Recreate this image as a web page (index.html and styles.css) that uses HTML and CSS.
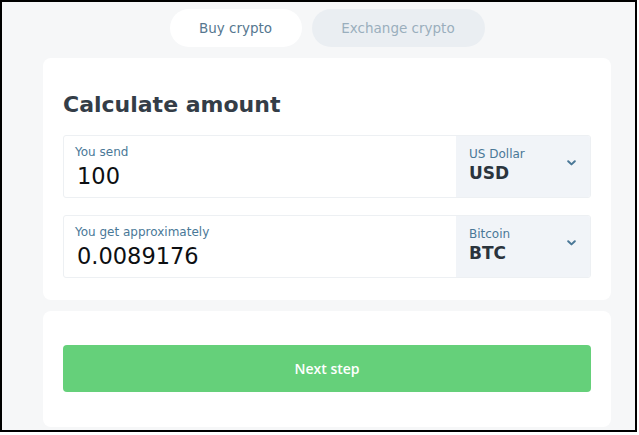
FILE: index.html
```html
<!DOCTYPE html>
<html>
<head>
<meta charset="utf-8">
<link rel="stylesheet" href="styles.css">
</head>
<body>
<div class="frame">
  <div class="content">
    <div class="tabs">
      <div class="tab active">Buy crypto</div>
      <div class="tab">Exchange crypto</div>
    </div>
    <div class="card calc">
      <h1 class="title">Calculate amount</h1>
      <div class="field">
        <div class="amount">
          <div class="label">You send</div>
          <div class="value">100</div>
        </div>
        <div class="currency">
          <div class="cur-text">
            <div class="label">US Dollar</div>
            <div class="code">USD</div>
          </div>
          <svg class="chev" width="9" height="6" viewBox="0 0 9 6"><path d="M1.2 1.2 L4.5 4.4 L7.8 1.2" fill="none" stroke="#4a7897" stroke-width="2" stroke-linecap="round" stroke-linejoin="round"/></svg>
        </div>
      </div>
      <div class="field">
        <div class="amount">
          <div class="label">You get approximately</div>
          <div class="value">0.0089176</div>
        </div>
        <div class="currency">
          <div class="cur-text">
            <div class="label">Bitcoin</div>
            <div class="code">BTC</div>
          </div>
          <svg class="chev" width="9" height="6" viewBox="0 0 9 6"><path d="M1.2 1.2 L4.5 4.4 L7.8 1.2" fill="none" stroke="#4a7897" stroke-width="2" stroke-linecap="round" stroke-linejoin="round"/></svg>
        </div>
      </div>
    </div>
    <div class="card action">
      <button class="next">Next step</button>
    </div>
  </div>
</div>
</body>
</html>
```
FILE: styles.css
```css
html, body {
  margin: 0;
  padding: 0;
  background: #ffffff;
}
.frame {
  width: 633px;
  height: 428px;
  border: 2px solid #000;
  background: #f6f7f8;
  overflow: hidden;
  font-family: "DejaVu Sans", sans-serif;
}
.content {
  width: 568px;
  margin-left: 41px;
  display: flex;
  flex-direction: column;
}
.tabs {
  display: flex;
  justify-content: center;
  gap: 10px;
  padding-top: 7px;
  margin-bottom: 11px;
}
.tab {
  height: 38px;
  border-radius: 19px;
  display: flex;
  align-items: center;
  justify-content: center;
  font-size: 13.5px;
  color: #9aaebd;
  background: #eaeef2;
  width: 173px;
}
.tab.active {
  background: #ffffff;
  color: #56778f;
  width: 132px;
}
.card {
  background: #ffffff;
  border-radius: 8px;
}
.calc {
  padding: 20px 20px 22px;
  display: flex;
  flex-direction: column;
  gap: 17px;
}
.title {
  margin: 13px 0 0;
  font-size: 22px;
  font-weight: bold;
  color: #343d47;
  line-height: 27px;
}
.field {
  display: flex;
  height: 63px;
  border: 1px solid #edf0f3;
  border-radius: 3px;
  box-sizing: border-box;
  overflow: hidden;
}
.amount {
  flex: 1;
  padding: 9px 11px 0;
}
.label {
  font-size: 12px;
  color: #4a7897;
  line-height: 14px;
}
.value {
  font-size: 22.5px;
  color: #0d0f12;
  font-weight: 500;
  line-height: 28px;
  margin-top: 3px;
  padding-left: 2px;
}
.currency {
  width: 134px;
  background: #f1f4f8;
  display: flex;
  align-items: center;
  justify-content: space-between;
  padding: 0 14px 0 13px;
  box-sizing: border-box;
}
.cur-text {
  display: flex;
  flex-direction: column;
  margin-top: -2px;
}
.code {
  font-size: 17px;
  font-weight: bold;
  color: #2b343d;
  line-height: 22px;
  margin-top: 1px;
}
.chev {
  margin-top: -8px;
}
.action {
  margin-top: 11px;
  padding: 34px 20px 35px;
}
.next {
  width: 100%;
  height: 47px;
  border: none;
  border-radius: 4px;
  background: #65d07a;
  color: #ffffff;
  font-family: "Open Sans", sans-serif;
  font-weight: 600;
  font-size: 14px;
}
```
